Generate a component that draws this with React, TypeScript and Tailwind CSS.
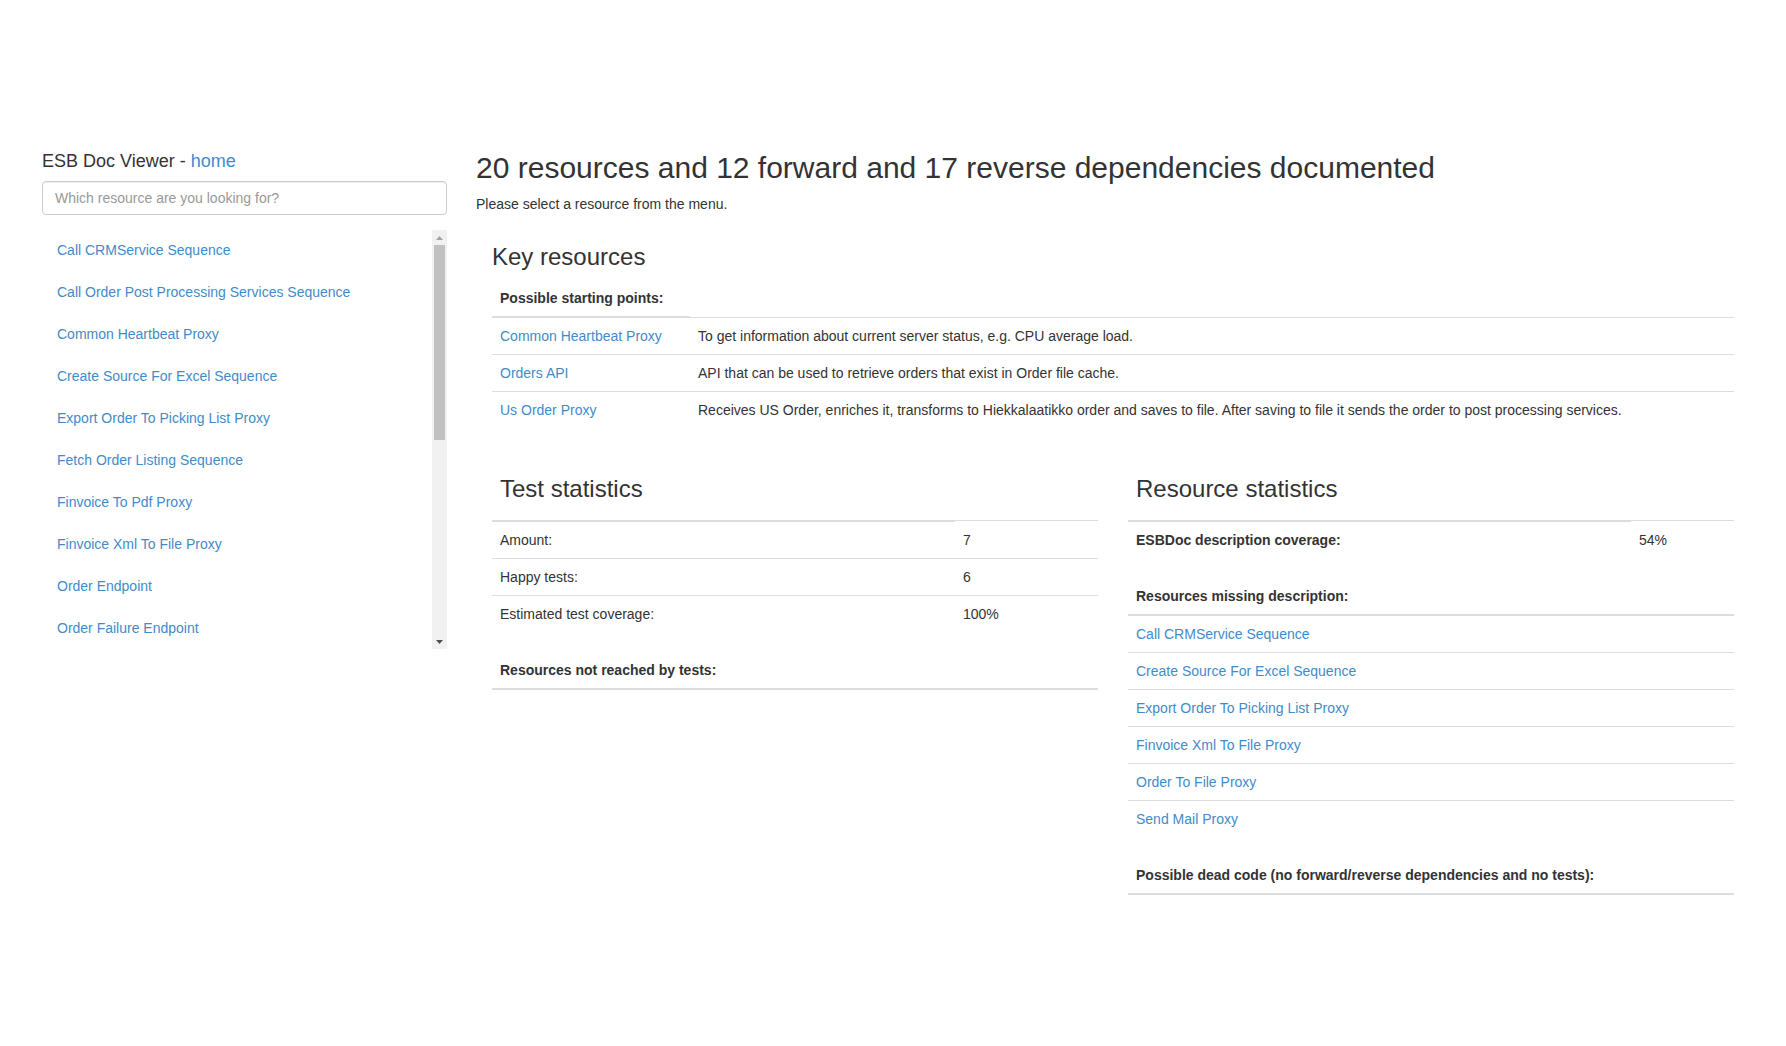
const menuItems = [
  'Call CRMService Sequence',
  'Call Order Post Processing Services Sequence',
  'Common Heartbeat Proxy',
  'Create Source For Excel Sequence',
  'Export Order To Picking List Proxy',
  'Fetch Order Listing Sequence',
  'Finvoice To Pdf Proxy',
  'Finvoice Xml To File Proxy',
  'Order Endpoint',
  'Order Failure Endpoint',
  'Order Listing Proxy',
  'Order Post Processing Proxy',
  'Order To File Proxy',
  'Order Transform Sequence',
  'Orders API',
  'Send Mail Proxy',
  'Store Order Sequence',
  'Us Order Endpoint',
  'Us Order Proxy',
  'Validate Order Sequence',
];

const keyResources = [
  { name: 'Common Heartbeat Proxy', desc: 'To get information about current server status, e.g. CPU average load.' },
  { name: 'Orders API', desc: 'API that can be used to retrieve orders that exist in Order file cache.' },
  {
    name: 'Us Order Proxy',
    desc: 'Receives US Order, enriches it, transforms to Hiekkalaatikko order and saves to file. After saving to file it sends the order to post processing services.',
  },
];

const testStats = [
  { label: 'Amount:', value: '7' },
  { label: 'Happy tests:', value: '6' },
  { label: 'Estimated test coverage:', value: '100%' },
];

const missingDescription = [
  'Call CRMService Sequence',
  'Create Source For Excel Sequence',
  'Export Order To Picking List Proxy',
  'Finvoice Xml To File Proxy',
  'Order To File Proxy',
  'Send Mail Proxy',
];

function ScrollBar() {
  return (
    <div className="w-[15px] shrink-0 bg-[#f1f1f1] flex flex-col">
      <div className="h-[15px] flex items-center justify-center">
        <svg width="7" height="4" viewBox="0 0 7 4">
          <path d="M3.5 0L7 4H0z" fill="#a3a3a3" />
        </svg>
      </div>
      <div className="h-[195px] mx-[2px] bg-[#c1c1c1]" />
      <div className="flex-1" />
      <div className="h-[15px] flex items-center justify-center">
        <svg width="7" height="4" viewBox="0 0 7 4">
          <path d="M0 0H7L3.5 4z" fill="#505050" />
        </svg>
      </div>
    </div>
  );
}

function Sidebar() {
  return (
    <aside className="w-[405px] shrink-0">
      <h4 className="mt-[1px] mb-[10px] text-[18px] leading-5">
        ESB Doc Viewer - <a className="text-[#428bca]" href="#">home</a>
      </h4>
      <input
        type="text"
        placeholder="Which resource are you looking for?"
        className="block w-full h-[34px] px-3 py-[6px] text-[14px] leading-5 text-[#555] border border-[#ccc] rounded bg-white shadow-[inset_0_1px_1px_rgba(0,0,0,0.075)] placeholder:text-[#999] outline-none"
      />
      <div className="mt-[15px] h-[419px] flex">
        <ul className="flex-1 overflow-y-auto [scrollbar-width:none] flex flex-col gap-[2px]">
          {menuItems.map((item) => (
            <li key={item}>
              <a href="#" className="block px-[15px] py-[10px] leading-5 text-[#428bca]">
                {item}
              </a>
            </li>
          ))}
        </ul>
        <ScrollBar />
      </div>
    </aside>
  );
}

function SectionHeading({ children }: { children: React.ReactNode }) {
  return <h3 className="mt-5 mb-[9px] text-[24px] leading-[1.1] font-normal">{children}</h3>;
}

function LinkTable({ title, items }: { title: string; items: string[] }) {
  return (
    <table className="w-full mb-5">
      <thead>
        <tr>
          <th className="p-2 text-left font-bold leading-5 border-b-2 border-[#ddd]">{title}</th>
        </tr>
      </thead>
      <tbody>
        {items.map((item) => (
          <tr key={item}>
            <td className="p-2 leading-5 border-t border-[#ddd]">
              <a href="#" className="text-[#428bca]">{item}</a>
            </td>
          </tr>
        ))}
      </tbody>
    </table>
  );
}

export default function App() {
  return (
    <div className="min-h-[1046px] bg-white text-[#333] text-[14px] font-['Liberation_Sans',Arial,sans-serif]">
      <div className="flex pt-[150px] pl-[42px]">
        <Sidebar />

        {/* Main content */}
        <main className="ml-[29px] w-[1273px] pt-[1px]">
          <h1 className="text-[30px] leading-[33px] font-normal mb-[10px]">
            20 resources and 12 forward and 17 reverse dependencies documented
          </h1>
          <p className="leading-5 mb-[30px]">Please select a resource from the menu.</p>

          <div className="pl-4 pr-[15px]">
            <h3 className="mb-[10px] text-[24px] leading-[1.1] font-normal">Key resources</h3>
            <table className="w-full mb-5">
              <thead>
                <tr>
                  <th className="w-[198px] p-2 text-left font-bold leading-5 border-b-2 border-[#ddd]">
                    Possible starting points:
                  </th>
                </tr>
              </thead>
              <tbody>
                {keyResources.map((r) => (
                  <tr key={r.name}>
                    <td className="w-[198px] p-2 leading-5 border-t border-[#ddd]">
                      <a href="#" className="text-[#428bca]">{r.name}</a>
                    </td>
                    <td className="p-2 leading-5 border-t border-[#ddd]">{r.desc}</td>
                  </tr>
                ))}
              </tbody>
            </table>

            <div className="grid grid-cols-2 gap-[30px]">
              {/* Test statistics */}
              <div>
                <table className="w-full mb-5">
                  <thead>
                    <tr>
                      <th className="w-[463px] p-2 text-left border-b-2 border-[#ddd]">
                        <SectionHeading>Test statistics</SectionHeading>
                      </th>
                    </tr>
                  </thead>
                  <tbody>
                    {testStats.map((s) => (
                      <tr key={s.label}>
                        <td className="w-[463px] p-2 leading-5 border-t border-[#ddd]">{s.label}</td>
                        <td className="p-2 leading-5 border-t border-[#ddd]">{s.value}</td>
                      </tr>
                    ))}
                  </tbody>
                </table>
                <LinkTable title="Resources not reached by tests:" items={[]} />
              </div>

              {/* Resource statistics */}
              <div>
                <table className="w-full mb-5">
                  <thead>
                    <tr>
                      <th className="w-[503px] p-2 text-left border-b-2 border-[#ddd]">
                        <SectionHeading>Resource statistics</SectionHeading>
                      </th>
                    </tr>
                  </thead>
                  <tbody>
                    <tr>
                      <th className="w-[503px] p-2 text-left font-bold leading-5 border-t border-[#ddd]">
                        ESBDoc description coverage:
                      </th>
                      <td className="p-2 leading-5 border-t border-[#ddd]">54%</td>
                    </tr>
                  </tbody>
                </table>
                <LinkTable title="Resources missing description:" items={missingDescription} />
                <LinkTable title="Possible dead code (no forward/reverse dependencies and no tests):" items={[]} />
              </div>
            </div>
          </div>
        </main>
      </div>
    </div>
  );
}
